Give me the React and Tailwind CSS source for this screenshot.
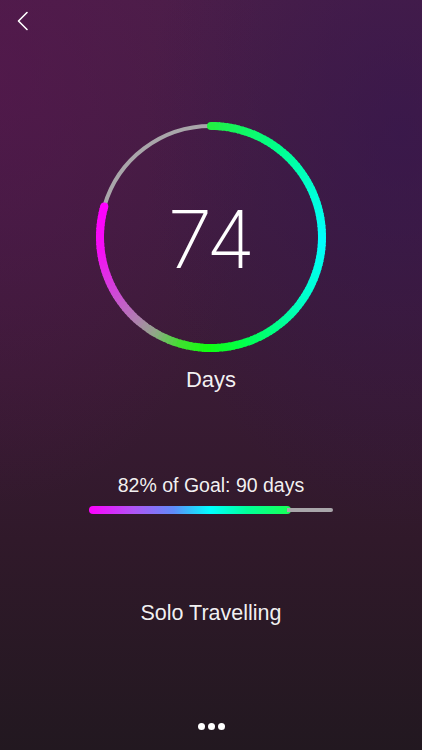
const STOPS = [
  [0, [0x22, 0xf0, 0x44]],
  [35, [0x00, 0xff, 0x88]],
  [68, [0x00, 0xff, 0xd8]],
  [92, [0x00, 0xff, 0xff]],
  [125, [0x00, 0xff, 0xc8]],
  [160, [0x00, 0xff, 0x55]],
  [182, [0x11, 0xff, 0x11]],
  [197, [0x44, 0xdd, 0x33]],
  [210, [0x90, 0xa8, 0x88]],
  [222, [0xb0, 0x80, 0xb0]],
  [240, [0xd0, 0x48, 0xd8]],
  [262, [0xf4, 0x10, 0xf4]],
  [286, [0xff, 0x00, 0xff]],
];

function colorAt(a) {
  for (let i = 1; i < STOPS.length; i++) {
    const [a1, c1] = STOPS[i];
    const [a0, c0] = STOPS[i - 1];
    if (a <= a1) {
      const t = (a - a0) / (a1 - a0);
      const c = c0.map((v, k) => Math.round(v + (c1[k] - v) * t));
      return `rgb(${c[0]},${c[1]},${c[2]})`;
    }
  }
  return "rgb(255,0,255)";
}

const CX = 120;
const CY = 120;
const R = 111;

function pt(deg) {
  const r = ((deg - 90) * Math.PI) / 180;
  return [CX + R * Math.cos(r), CY + R * Math.sin(r)];
}

function arc(a0, a1) {
  const [x0, y0] = pt(a0);
  const [x1, y1] = pt(a1);
  const large = a1 - a0 > 180 ? 1 : 0;
  return `M ${x0} ${y0} A ${R} ${R} 0 ${large} 1 ${x1} ${y1}`;
}

function Ring() {
  const end = 286;
  const step = 2;
  const segs = [];
  for (let a = 0; a < end; a += step) {
    const b = Math.min(a + step + 0.6, end);
    segs.push(
      <path key={a} d={arc(a, b)} stroke={colorAt(a + step / 2)} strokeWidth="8" fill="none" />
    );
  }
  const [sx, sy] = pt(0);
  const [ex, ey] = pt(end);
  return (
    <svg width="240" height="240" viewBox="0 0 240 240">
      <path d={arc(end, 359.9)} stroke="#a9a6aa" strokeWidth="4" fill="none" strokeLinecap="round" />
      {segs}
      <circle cx={sx} cy={sy} r="4" fill={colorAt(0)} />
      <circle cx={ex} cy={ey} r="4" fill={colorAt(end)} />
    </svg>
  );
}

export default function App() {
  return (
    <div
      className="relative w-[422px] h-[750px] overflow-hidden flex flex-col items-center text-white bg-[image:radial-gradient(ellipse_at_95%_18%,rgba(50,20,80,0.55)_0%,rgba(50,20,80,0)_45%),radial-gradient(ellipse_at_0%_10%,rgba(90,20,80,0.5)_0%,rgba(90,20,80,0)_45%),linear-gradient(180deg,#4a1f48_0%,#401d40_30%,#3a1b35_50%,#30192a_72%,#221820_100%)]"
      style={{ fontFamily: '"Liberation Sans", Arial, sans-serif' }}
    >
      <div className="w-full h-[42px] px-[16px] flex items-center">
        <svg width="14" height="20" viewBox="0 0 14 20" fill="none">
          <path d="M11 1.5 L2.5 10 L11 18.5" stroke="white" strokeWidth="1.6" strokeLinecap="round" strokeLinejoin="round" />
        </svg>
      </div>

      <div className="relative mt-[75px] w-[240px] h-[240px]">
        <Ring />
        <div
          className="absolute inset-0 flex items-center justify-center text-[80px] leading-none font-extralight tracking-[-1px]"
          style={{ fontFamily: 'Inter, "Liberation Sans", sans-serif' }}
        >
          <span className="pt-[4px]">74</span>
        </div>
      </div>

      <div className="mt-[10px] text-[22px] leading-[26px] text-white/95">Days</div>

      <div className="mt-[80px] text-[19.5px] leading-[24px] text-white/95">82% of Goal: 90 days</div>

      <div className="mt-[9px] w-[244px] h-[8px] flex items-center">
        <div className="w-[202px] h-[8px] rounded-full bg-[linear-gradient(90deg,#ff00ff_0%,#b055f5_22%,#5f8cfa_42%,#00ffff_60%,#00ff9a_78%,#18ff55_100%)]" />
        <div className="flex-1 h-[4px] -ml-[4px] rounded-r-full bg-[#a9a6aa]" />
      </div>

      <div className="mt-[85px] text-[21.5px] leading-[28px] text-white/95">Solo Travelling</div>

      <div className="mt-[96px] flex gap-[3px]">
        <div className="w-[7px] h-[7px] rounded-full bg-white" />
        <div className="w-[7px] h-[7px] rounded-full bg-white" />
        <div className="w-[7px] h-[7px] rounded-full bg-white" />
      </div>
    </div>
  );
}
